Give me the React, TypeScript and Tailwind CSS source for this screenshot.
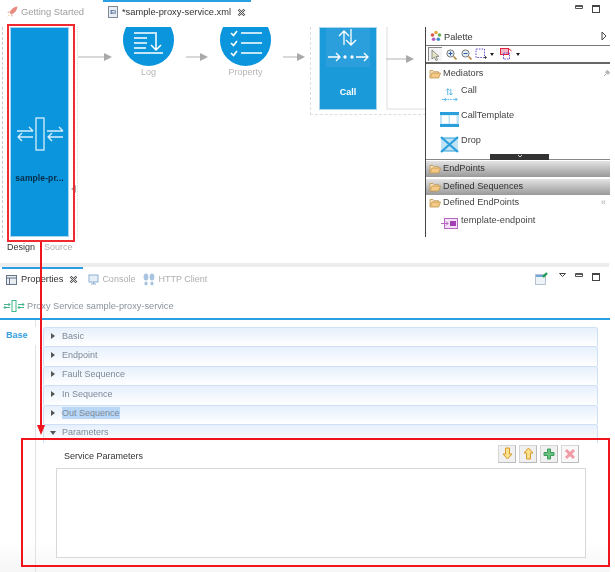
import type { ReactNode } from "react";

const sections = [
  { name: "Basic" },
  { name: "Endpoint" },
  { name: "Fault Sequence" },
  { name: "In Sequence" },
  { name: "Out Sequence", selected: true },
];

function Folder() {
  return (
    <svg width="12" height="10" viewBox="0 0 12 10" className="shrink-0">
      <path d="M1 8.5V1.5h3l1 1.2h4.5v1.5" fill="#f8e3ba" stroke="#c2954c" strokeWidth="0.8" />
      <path d="M1 9h8.6L11.6 4H3z" fill="#f3c985" stroke="#c2954c" strokeWidth="0.8" />
    </svg>
  );
}

function CloseX() {
  return (
    <svg width="9" height="9" viewBox="0 0 9 9">
      <path d="M1.5 1.5l6 6M7.5 1.5l-6 6" stroke="#555" strokeWidth="2.4" />
      <path d="M1.5 1.5l6 6M7.5 1.5l-6 6" stroke="#fff" strokeWidth="0.8" />
    </svg>
  );
}

function MinMax() {
  return (
    <div className="flex items-start gap-[9px]">
      <div className="w-[8px] h-[4px] border border-[#555] border-t-2 rounded-[1px] bg-white" />
      <div className="w-[8px] h-[8px] border border-[#444] border-t-2 bg-white" />
    </div>
  );
}

function Arrow({ left, top, width }: { left: number; top: number; width: number }) {
  return (
    <svg
      className="absolute"
      style={{ left, top }}
      width={width}
      height="10"
      viewBox={`0 0 ${width} 10`}
    >
      <path d={`M0 5H${width - 7}`} stroke="#c9c9c9" strokeWidth="1.4" />
      <path d={`M${width - 8} 1L${width} 5L${width - 8} 9z`} fill="#a9a9a9" />
    </svg>
  );
}

function Chip({ children, faded }: { children: ReactNode; faded?: boolean }) {
  return (
    <div
      className={`w-[18px] h-[18px] flex items-center justify-center border border-[#d6d6d6] border-b-[#bbb] border-r-[#bbb] ${
        faded ? "bg-[#f8f8f8]" : "bg-[#f0f0f0]"
      }`}
    >
      {children}
    </div>
  );
}

export default function App() {
  return (
    <div
      className="relative w-[615px] h-[572px] overflow-hidden bg-white text-[9.2px]"
      style={{ fontFamily: '"Liberation Sans", Arial, sans-serif' }}
    >
      <div className="blur-[0.35px]">
        {/* Editor tabs */}
        <div className="relative h-[24px] flex items-center pl-[6px]">
          <div className="absolute left-[103px] top-0 w-[148px] h-[2px] bg-[#2a9fe3]" />
          <div className="flex items-center gap-[3px] w-[102px] text-[#a0a0a0] text-[9.4px]">
            <svg width="12" height="12" viewBox="0 0 12 12">
              <path d="M11.5.5C8 .8 5 3 3.5 6.5l2 2C9 7 11.2 4 11.5.5z" fill="#e98a80" />
              <path d="M3.5 5L1 6.5l2 .5zM7 8.5L5.5 11 5 9z" fill="#efa79f" />
              <path d="M3 8.5L1 11l2.5-1.8z" fill="#f1c27a" />
            </svg>
            <span className="pt-[1px]">Getting Started</span>
          </div>
          <div className="flex items-center text-[#333]">
            <div className="w-[10px] h-[12px] border border-[#7d8a99] bg-[#e9edf2] text-[6px] leading-[11px] text-[#3f5e8c] text-center font-bold">
              EI
            </div>
            <span className="ml-[4px] pt-[1px] text-[9.3px]">*sample-proxy-service.xml</span>
            <span className="ml-[6px] flex">
              <CloseX />
            </span>
          </div>
          <div className="absolute left-[575px] top-[5px]">
            <MinMax />
          </div>
        </div>

        {/* Canvas + palette */}
        <div className="flex h-[239px] pt-[3px]">
          <div className="relative w-[425px] h-[213px] shrink-0 overflow-hidden">
            {/* diagram, free canvas */}
            <div className="absolute left-[2px] top-0 w-0 h-[211px] border-l border-dashed border-[#ccc]" />
            <div className="absolute left-[77px] top-0 w-0 h-[211px] border-l border-dotted border-[#ddd]" />
            <div className="absolute left-[10px] top-0 w-[59px] h-[210px] bg-[#0b95dc] border border-[#a8d6f0] flex flex-col items-center">
              <svg width="52" height="34" viewBox="0 0 52 34" className="mt-[89px]" fill="none" stroke="#d8eefb" strokeWidth="1.3">
                <rect x="22" y="1" width="8" height="32" />
                <path d="M3 14H19M15 10l4 4M19 20H4M8 16l-4 4 4 4" />
                <path d="M33 14H49M45 10l4 4M49 20H34M38 16l-4 4 4 4" />
              </svg>
              <div className="mt-[21px] font-bold text-[8.5px] tracking-[0.1px] text-[#062a44]">sample-pr...</div>
            </div>
            <svg width="6" height="8" viewBox="0 0 6 8" className="absolute left-[71px] top-[158px]">
              <path d="M5 0v8L0 4z" fill="#aaa" />
            </svg>

            <Arrow left={78} top={25} width={34} />

            <div className="absolute left-[123px] -top-[13px] flex flex-col items-center w-[51px]">
              <div className="w-[51px] h-[52px] rounded-full bg-[#0b95dc] flex items-end justify-center pb-[10px]">
                <svg width="34" height="26" viewBox="0 0 34 26" fill="none" stroke="#fff" strokeWidth="1.5">
                  <path d="M2 3H23M2 8H15M2 13H15M2 18H14M2 23H31M24 2V20M19 15l5 5 5-5" />
                </svg>
              </div>
              <div className="text-[#b5b5b5] text-[9px] leading-[12px]">Log</div>
            </div>

            <Arrow left={186} top={25} width={22} />

            <div className="absolute left-[220px] -top-[13px] flex flex-col items-center w-[51px]">
              <div className="w-[51px] h-[52px] rounded-full bg-[#0b95dc] flex items-end justify-center pb-[9px]">
                <svg width="34" height="28" viewBox="0 0 34 28" fill="none" stroke="#fff" strokeWidth="1.6">
                  <path d="M12 4H33M12 14H33M12 24H33" />
                  <path d="M2 4l2.5 2.5L8 2M2 14l2.5 2.5L8 12M2 24l2.5 2.5L8 22" />
                </svg>
              </div>
              <div className="text-[#b5b5b5] text-[9px] leading-[12px]">Property</div>
            </div>

            <Arrow left={283} top={25} width={22} />

            <div className="absolute left-[310px] top-0 w-[116px] h-[88px] border-l border-b border-dashed border-[#ddd]" />
            <div className="absolute left-[386px] top-0 w-[40px] h-[83px] border-l-2 border-b-2 border-[#eee]" />
            <div className="absolute left-[319px] top-0 w-[58px] h-[83px] bg-[#1b9ad9] border border-[#a8d6f0] flex flex-col items-center">
              <div className="w-[44px] h-[39px] bg-[#2a9fdc] flex items-end justify-center">
                <svg width="42" height="38" viewBox="0 0 42 38" fill="none" stroke="#fff" strokeWidth="1.3">
                  <path d="M17 16V2M12 7l5-5 5 5M24 0V16M19 11l5 5 5-5" />
                  <path d="M1 28H13M9 24l4 4-4 4M29 28H41M37 24l4 4-4 4" />
                  <circle cx="18" cy="28" r="1" fill="#fff" />
                  <circle cx="25" cy="28" r="1" fill="#fff" />
                </svg>
              </div>
              <div className="mt-[19px] text-white font-bold text-[9px] leading-[12px]">Call</div>
            </div>

            <Arrow left={386} top={27} width={28} />
          </div>

          <div className="w-[185px] h-[210px] border-l-[1.5px] border-[#444]">
            <div className="flex items-center h-[19px] pl-[4px] pr-[3px] border-b-[1.5px] border-[#777] text-[#333]">
              <svg width="12" height="12" viewBox="0 0 12 12">
                <circle cx="6" cy="2.5" r="1.8" fill="#e3a63a" />
                <circle cx="9.5" cy="5" r="1.8" fill="#6bb04a" />
                <circle cx="8.3" cy="9.2" r="1.8" fill="#3f8fd0" />
                <circle cx="3.6" cy="9.2" r="1.8" fill="#b05fc0" />
                <circle cx="2.5" cy="5" r="1.8" fill="#d8584a" />
              </svg>
              <span className="ml-[2px] flex-1 pt-[3px]">Palette</span>
              <svg width="6" height="10" viewBox="0 0 6 10">
                <path d="M1 1l4 4-4 4z" fill="#fff" stroke="#444" />
              </svg>
            </div>

            <div className="flex items-center h-[18px] pl-[2px] border-b-2 border-[#666]">
              <div className="w-[14px] h-[14px] border-l border-t border-[#888] bg-[#f4f4f4] flex items-center justify-center">
                <svg width="9" height="12" viewBox="0 0 9 12">
                  <path d="M1 1v9l2.4-2 1.6 3.5 1.6-.7L5 7.4h3z" fill="#e7e7c8" stroke="#777" strokeWidth="0.8" />
                </svg>
              </div>
              <svg width="11" height="11" viewBox="0 0 11 11" className="ml-[4px]">
                <circle cx="4.5" cy="4.5" r="3.6" fill="#e3eef8" stroke="#777" />
                <path d="M7.5 7.5l3 3" stroke="#b98a3e" strokeWidth="1.6" />
                <path d="M2.5 4.5h4M4.5 2.5v4" stroke="#2a55a8" />
              </svg>
              <svg width="11" height="11" viewBox="0 0 11 11" className="ml-[4px]">
                <circle cx="4.5" cy="4.5" r="3.6" fill="#e3eef8" stroke="#777" />
                <path d="M7.5 7.5l3 3" stroke="#b98a3e" strokeWidth="1.6" />
                <path d="M2.5 4.5h4" stroke="#2a55a8" />
              </svg>
              <svg width="12" height="12" viewBox="0 0 12 12" className="ml-[3px]">
                <rect x="1" y="1" width="8.5" height="8.5" fill="none" stroke="#6a4fd0" strokeDasharray="1.6 1.2" />
                <path d="M9 9.5h3M10.5 8v3" stroke="#333" strokeWidth="0.8" />
              </svg>
              <svg width="4" height="3" viewBox="0 0 4 3" className="ml-[3px]">
                <path d="M0 0h4L2 3z" fill="#222" />
              </svg>
              <svg width="12" height="13" viewBox="0 0 12 13" className="ml-[6px]">
                <rect x="0.5" y="0.5" width="8" height="6" fill="#f3b8c8" stroke="#e2233f" />
                <rect x="3.5" y="5" width="6" height="6" fill="none" stroke="#6a4fd0" strokeDasharray="1.6 1" />
                <path d="M9 1l2.5 2" stroke="#e2233f" />
              </svg>
              <svg width="4" height="3" viewBox="0 0 4 3" className="ml-[4px]">
                <path d="M0 0h4L2 3z" fill="#222" />
              </svg>
            </div>

            <div className="relative h-[94px]">
              <div className="flex items-center h-[18px] pl-[3px] mt-[1px] text-[#444]">
                <Folder />
                <span className="ml-[2px]">Mediators</span>
                <svg width="7" height="7" viewBox="0 0 7 7" className="absolute left-[177px] top-[5px]">
                  <path d="M1 6l2-2M2.5 2L5 4.5 6.5 2.5 4.5.5z" stroke="#aaa" fill="#bbb" />
                </svg>
              </div>
              <div className="flex flex-col gap-[6.5px] pl-[14px] pt-[4px] text-[#444]">
                <div className="flex h-[18px]">
                  <svg width="19" height="16" viewBox="0 0 19 18" fill="none" stroke="#3ba3dd" strokeWidth="0.9">
                    <path d="M7.5 9V2M5.5 4l2-2 2 2M11 2v7M9 7l2 2 2-2" />
                    <path d="M1 14h5M4 12l2 2-2 2M13 14h5M16 12l2 2-2 2" />
                    <circle cx="8" cy="14" r="0.5" />
                    <circle cx="11" cy="14" r="0.5" />
                  </svg>
                  <span className="ml-[2px] leading-[12px] -mt-[3px]">Call</span>
                </div>
                <div className="flex h-[18px]">
                  <svg width="19" height="15" viewBox="0 0 19 15">
                    <rect x="0" y="0" width="19" height="15" fill="#2a9fdc" />
                    <rect x="0" y="3" width="19" height="9" fill="#bfe2f5" />
                    <rect x="2" y="3.5" width="6.5" height="8" fill="#fff" />
                    <rect x="10" y="3.5" width="6.5" height="8" fill="#fff" />
                  </svg>
                  <span className="ml-[2px] leading-[12px] -mt-[3px]">CallTemplate</span>
                </div>
                <div className="flex h-[18px]">
                  <svg width="19" height="17" viewBox="0 0 19 17" fill="none">
                    <rect x="1" y="2" width="17" height="13" fill="#bfe2f5" />
                    <path d="M1 2h17M1 15h17" stroke="#2a9fdc" />
                    <path d="M1 1l17 15M18 1L1 16" stroke="#2a9fdc" strokeWidth="2.2" />
                  </svg>
                  <span className="ml-[2px] leading-[12px] -mt-[2px]">Drop</span>
                </div>
              </div>
            </div>

            <div className="relative h-[1px] bg-[#888]">
              <div className="absolute left-[64px] -top-[5px] w-[59px] h-[6px] bg-[#333] flex justify-center">
                <svg width="6" height="4" viewBox="0 0 6 4">
                  <path d="M1 1l2 2 2-2" stroke="#ddd" fill="none" />
                </svg>
              </div>
            </div>

            <div className="h-[16px] mt-[1px] flex items-center pl-[3px] bg-gradient-to-b from-[#e4e4e4] to-[#999] text-[#333]">
              <Folder />
              <span className="ml-[2px]">EndPoints</span>
            </div>
            <div className="h-[16px] mt-[2px] flex items-center pl-[3px] bg-gradient-to-b from-[#e4e4e4] to-[#999] text-[#333]">
              <Folder />
              <span className="ml-[2px]">Defined Sequences</span>
            </div>
            <div className="relative h-[16px] flex items-center pl-[3px] text-[#444]">
              <Folder />
              <span className="ml-[2px]">Defined EndPoints</span>
              <span className="absolute left-[175px] top-[1px] text-[#aaa] text-[9px]">«</span>
            </div>
            <div className="flex items-start pl-[15px] mt-[3px] text-[#444]">
              <svg width="17" height="13" viewBox="0 0 17 13" className="mt-[3px]">
                <rect x="3.5" y="1.5" width="13" height="10" fill="#f3e2f5" stroke="#b565c4" />
                <rect x="9" y="4" width="6" height="5" fill="#a33fb5" />
                <path d="M0 6.5h7M5 4.5l2 2-2 2" stroke="#b565c4" fill="none" />
              </svg>
              <span className="ml-[3px] leading-[12px] tracking-[0.05px]">template-endpoint</span>
            </div>
          </div>
        </div>

        {/* Properties view */}
        <div className="h-[4px] w-[609px] bg-[#ededed]" />
        <div className="relative w-[610px] h-[305px] bg-gradient-to-b from-white from-90% to-[#f6f6f6]">
          <div className="absolute left-[2px] top-0 w-[81px] h-[2px] bg-[#2a9fe3]" />
          <div className="flex items-center h-[24px] pl-[6px] pt-[1px]">
            <svg width="11" height="10" viewBox="0 0 11 10">
              <rect x="0.5" y="0.5" width="10" height="9" fill="#e8edf2" stroke="#66758a" />
              <path d="M.5 3h10M3.5 3v6.5" stroke="#66758a" />
            </svg>
            <span className="ml-[4px] text-[#333] text-[9.3px]">Properties</span>
            <span className="ml-[6px] flex">
              <CloseX />
            </span>
            <svg width="11" height="11" viewBox="0 0 11 11" className="ml-[10px]">
              <rect x="1" y="1" width="9" height="7" fill="#e6eef7" stroke="#8fb0d3" />
              <path d="M3 10h5M5.5 8v2" stroke="#8fb0d3" />
            </svg>
            <span className="ml-[3px] text-[#aeaeae] text-[9px]">Console</span>
            <svg width="12" height="13" viewBox="0 0 12 13" className="ml-[8px]">
              <ellipse cx="3" cy="4" rx="2.4" ry="3.6" fill="#a8c4e0" />
              <ellipse cx="9" cy="4" rx="2.4" ry="3.6" fill="#a8c4e0" />
              <ellipse cx="3" cy="10.5" rx="1.6" ry="2" fill="#a8c4e0" />
              <ellipse cx="9" cy="10.5" rx="1.6" ry="2" fill="#a8c4e0" />
            </svg>
            <span className="ml-[3px] text-[#aeaeae] text-[9px]">HTTP Client</span>
            <div className="flex items-start self-start mt-[4px] ml-auto mr-[10px]">
              <svg width="13" height="13" viewBox="0 0 13 13">
                <rect x="0.5" y="2.5" width="10" height="10" fill="#eef3f8" stroke="#b8c2cc" />
                <rect x="1" y="3" width="9" height="2" fill="#6fa8dc" />
                <path d="M8 5l4-4" stroke="#1f9d55" strokeWidth="2.4" />
              </svg>
              <svg width="7" height="4" viewBox="0 0 7 4" className="ml-[11px] mt-[1px]">
                <path d="M.5.5h6L3.5 3.5z" fill="#fff" stroke="#444" />
              </svg>
              <div className="ml-[9px] mt-[1px]">
                <MinMax />
              </div>
            </div>
          </div>

          <div className="flex items-center h-[29px] border-b-2 border-[#2a9fe3] pl-[3px] pt-[3px] text-[#8a939c] text-[9.2px]">
            <svg width="22" height="12" viewBox="0 0 22 12" fill="none" stroke="#3fb58a" strokeWidth="1">
              <rect x="9" y="0.5" width="4" height="11" />
              <path d="M1 4.5h6M5.5 3l1.5 1.5L5.5 6M7 7.5H1M2.5 6L1 7.5 2.5 9M15 4.5h6M19.5 3L21 4.5 19.5 6M21 7.5h-6M16.5 6L15 7.5 16.5 9" />
            </svg>
            <span className="ml-[2px] pt-[1px]">Proxy Service sample-proxy-service</span>
          </div>

          <div className="flex h-[252px]">
            <div className="w-[36px] border-r border-[#e2e2e2] shrink-0 relative">
              <div className="absolute left-0 top-[7px] w-[36px] h-[18px] bg-white pl-[6px] font-bold text-[#3a9fdd] text-[9px] leading-[17px]">
                Base
              </div>
            </div>
            <div className="flex-1 pl-[7px] pr-[12px] pt-[7px]">
              {sections.map((s) => (
                <div
                  key={s.name}
                  className="h-[19.4px] pb-[3px] flex items-center pl-[7px] border border-b-0 border-[#cfe0f6] rounded-t-[3px] bg-gradient-to-b from-[#e6f0fc] to-white text-[#7e8a98] text-[9px]"
                >
                  <svg width="4" height="6" viewBox="0 0 4 6">
                    <path d="M0 0l4 3-4 3z" fill="#555" />
                  </svg>
                  <span className={`ml-[7px] leading-[12px] ${s.selected ? "bg-[#b9d7f7]" : ""}`}>{s.name}</span>
                </div>
              ))}
              <div className="h-[19.4px] pb-[3px] flex items-center pl-[6px] border border-b-0 border-[#cfe0f6] rounded-t-[3px] bg-gradient-to-b from-[#e6f0fc] to-white text-[#7e8a98] text-[9px]">
                <svg width="6" height="4" viewBox="0 0 6 4">
                  <path d="M0 0h6L3 4z" fill="#555" />
                </svg>
                <span className="ml-[6px]">Parameters</span>
              </div>
              <div className="flex items-start justify-between h-[18px] mt-[1.6px] pl-[21px] pr-[19px]">
                <span className="text-[#333] text-[9px] leading-[11px] pt-[6px]">Service Parameters</span>
                <div className="flex gap-[3px]">
                  <Chip>
                    <svg width="11" height="13" viewBox="0 0 11 13">
                      <path d="M3.5 1h4v6h2.5L5.5 12 1 7h2.5z" fill="#fbe08a" stroke="#d99a2a" />
                    </svg>
                  </Chip>
                  <Chip>
                    <svg width="11" height="13" viewBox="0 0 11 13">
                      <path d="M3.5 12h4V6h2.5L5.5 1 1 6h2.5z" fill="#fbe08a" stroke="#d99a2a" />
                    </svg>
                  </Chip>
                  <Chip>
                    <svg width="12" height="12" viewBox="0 0 12 12">
                      <path d="M4.5 1h3v3.5H11v3H7.5V11h-3V7.5H1v-3h3.5z" fill="#67c27f" stroke="#3a9a58" />
                    </svg>
                  </Chip>
                  <Chip faded>
                    <svg width="12" height="12" viewBox="0 0 12 12">
                      <path d="M2 2l8 8M10 2l-8 8" stroke="#f29aa5" strokeWidth="3" />
                    </svg>
                  </Chip>
                </div>
              </div>
              <div className="ml-[13px] mt-[5px] w-[530px] h-[90px] border border-[#d8d8d8] bg-white" />
            </div>
          </div>
        </div>
      </div>

      {/* Design / Source tabs sit under the canvas */}
      <div className="absolute left-[7px] top-[241px] flex gap-[9px] leading-[12px] text-[9px] blur-[0.35px]">
        <span className="text-[#333]">Design</span>
        <span className="text-[#b0b0b0]">Source</span>
      </div>

      {/* Red annotations */}
      <div className="absolute left-[7px] top-[24px] w-[68px] h-[218px] border-2 border-[#f02a30]" />
      <div className="absolute left-[21px] top-[438px] w-[589px] h-[129px] border-2 border-[#f0141c]" />
      <div className="absolute left-[40px] top-[242px] w-[2px] h-[184px] bg-[#f0141c]" />
      <svg width="8" height="10" viewBox="0 0 8 10" className="absolute left-[37px] top-[425px]">
        <path d="M0 0h8L4 10z" fill="#f0141c" />
      </svg>
    </div>
  );
}
